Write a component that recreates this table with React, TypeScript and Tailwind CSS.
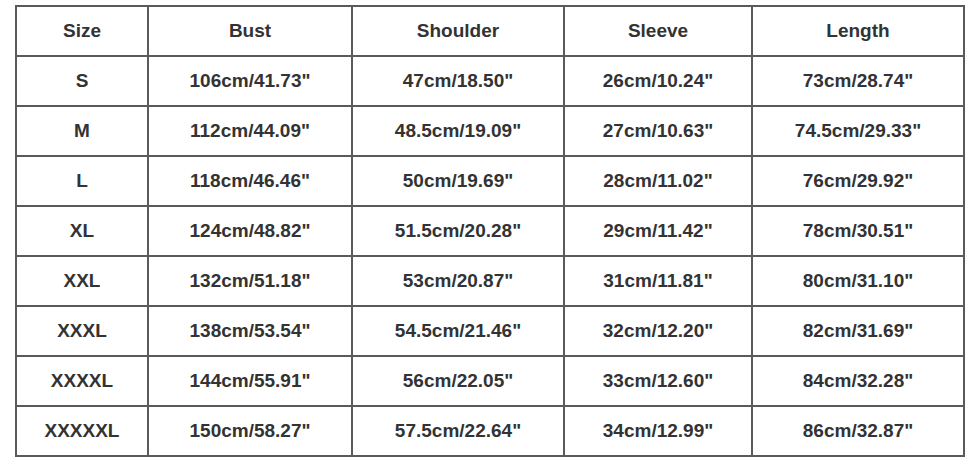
const headers = ["Size", "Bust", "Shoulder", "Sleeve", "Length"];

const rows = [
	["S", "106cm/41.73''", "47cm/18.50''", "26cm/10.24''", "73cm/28.74''"],
	["M", "112cm/44.09''", "48.5cm/19.09''", "27cm/10.63''", "74.5cm/29.33''"],
	["L", "118cm/46.46''", "50cm/19.69''", "28cm/11.02''", "76cm/29.92''"],
	["XL", "124cm/48.82''", "51.5cm/20.28''", "29cm/11.42''", "78cm/30.51''"],
	["XXL", "132cm/51.18''", "53cm/20.87''", "31cm/11.81''", "80cm/31.10''"],
	["XXXL", "138cm/53.54''", "54.5cm/21.46''", "32cm/12.20''", "82cm/31.69''"],
	["XXXXL", "144cm/55.91''", "56cm/22.05''", "33cm/12.60''", "84cm/32.28''"],
	["XXXXXL", "150cm/58.27''", "57.5cm/22.64''", "34cm/12.99''", "86cm/32.87''"],
];

const widths = ["w-[132px]", "w-[204px]", "w-[212px]", "w-[188px]", "w-[212px]"];

function Row({ cells }: { cells: string[] }) {
	return (
		<tr className="h-[50px]">
			{cells.map((c, i) => (
				<td
					key={i}
					className={`${widths[i]} border-2 border-[#5a5a5a] text-center align-middle`}
				>
					{c.replace("''", '"')}
				</td>
			))}
		</tr>
	);
}

export default function App() {
	return (
		<div className="h-[463px] w-[980px] bg-white pl-[15px] pt-[5px]">
			<table
				className="table-fixed border-collapse text-[19px] font-bold text-[#333]"
				style={{ fontFamily: '"Liberation Sans", Arial, sans-serif' }}
			>
				<tbody>
					<Row cells={headers} />
					{rows.map((r) => (
						<Row key={r[0]} cells={r} />
					))}
				</tbody>
			</table>
		</div>
	);
}
